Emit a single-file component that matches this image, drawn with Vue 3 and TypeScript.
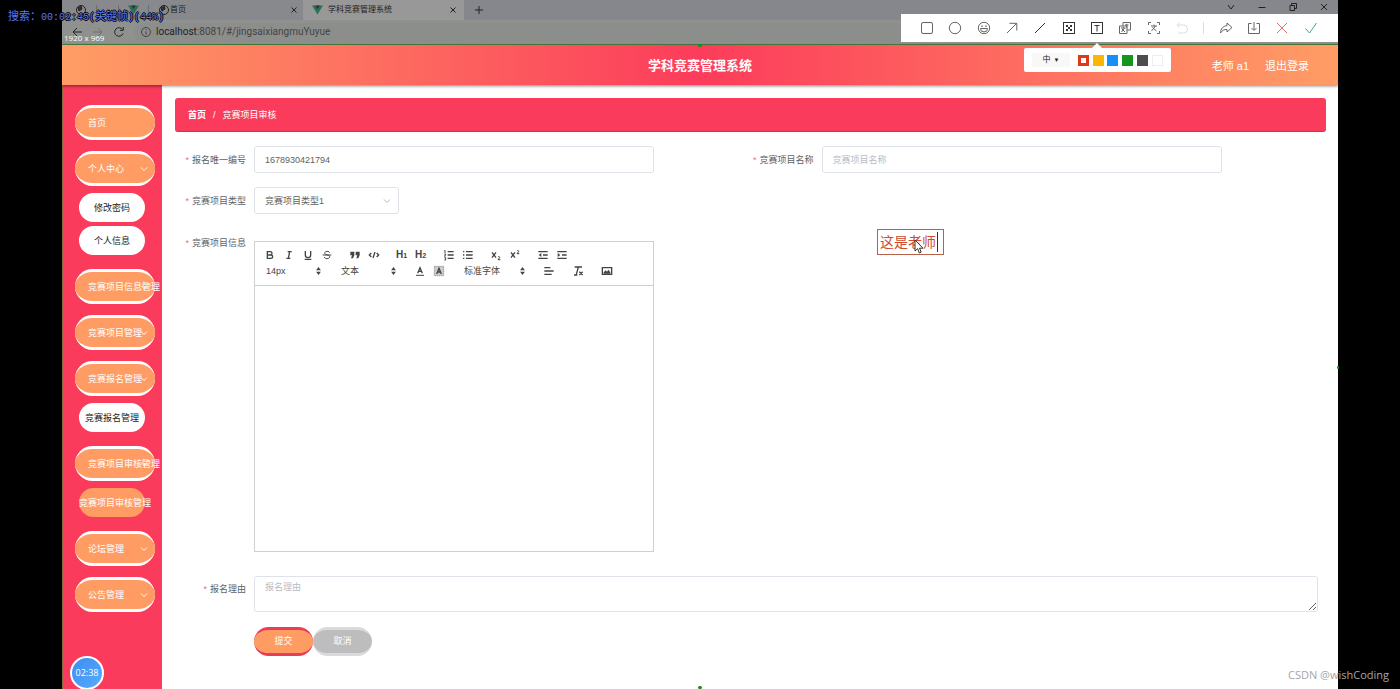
<script setup lang="ts">
import { ref } from 'vue'

interface MenuEntry {
  label: string
  arrow?: boolean
  children?: { label: string; active?: boolean }[]
}

const menu: MenuEntry[] = [
  { label: '首页' },
  { label: '个人中心', arrow: true, children: [{ label: '修改密码' }, { label: '个人信息' }] },
  { label: '竞赛项目信息管理', arrow: true },
  { label: '竞赛项目管理', arrow: true },
  { label: '竞赛报名管理', arrow: true, children: [{ label: '竞赛报名管理' }] },
  { label: '竞赛项目审核管理', arrow: true, children: [{ label: '竞赛项目审核管理', active: true }] },
  { label: '论坛管理', arrow: true },
  { label: '公告管理', arrow: true },
]

const signupNo = ref('1678930421794')
const projectName = ref('')
const projectType = ref('竞赛项目类型1')
const reason = ref('')
const note = ref('这是老师')

const swatches = ['red', 'yellow', 'blue', 'green', 'gray', 'white']
</script>

<template>
  <div class="screen">
    <div class="stage">
      <div class="tabs">
        <div class="tab idle">
          <svg class="pin" viewBox="0 0 12 12"><circle cx="6" cy="6" r="4.5" /><path d="M3 4l3-2 1 3-3 2z" class="fill" /></svg>
          <i class="bar"></i>
          <i class="bar"></i>
          <svg class="vue" viewBox="0 0 12 10"><path d="M0 0h12L6 10z" fill="#2f6f58" /><path d="M3.5 0h5L6 4z" fill="#27343f" /></svg>
          <i class="bar"></i>
          <svg class="pin" viewBox="0 0 12 12"><circle cx="6" cy="6" r="4.5" /><path d="M3 4l3-2 1 3-3 2z" class="fill" /></svg>
          <span class="tab-title">首页</span>
          <button class="x" aria-label="关闭"><svg viewBox="0 0 8 8"><path d="M1.5 1.5l5 5M6.5 1.5l-5 5" /></svg></button>
        </div>
        <div class="tab current">
          <svg class="vue" viewBox="0 0 12 10"><path d="M0 0h12L6 10z" fill="#2f6f58" /><path d="M3.5 0h5L6 4z" fill="#27343f" /></svg>
          <span class="tab-title">学科竞赛管理系统</span>
          <button class="x" aria-label="关闭"><svg viewBox="0 0 8 8"><path d="M1.5 1.5l5 5M6.5 1.5l-5 5" /></svg></button>
        </div>
        <button class="plus" aria-label="新标签页"><svg viewBox="0 0 10 10"><path d="M5 1v8M1 5h8" /></svg></button>
        <div class="win">
          <button aria-label="更多"><svg viewBox="0 0 10 10"><path d="M2 3l3 4 3-4" /></svg></button>
          <button aria-label="最小化"><svg viewBox="0 0 10 10"><path d="M1.5 5.5h7" /></svg></button>
          <button aria-label="还原"><svg viewBox="0 0 10 10"><path d="M2 3.5h4.5v5H2zM3.5 3V1.5h5v5H7" /></svg></button>
          <button aria-label="关闭窗口"><svg viewBox="0 0 10 10"><path d="M2 2l6 6M8 2l-6 6" /></svg></button>
        </div>
      </div>
      <div class="address">
        <button aria-label="后退"><svg viewBox="0 0 12 12"><path d="M11 6H2M6 2L2 6l4 4" /></svg></button>
        <button class="dim" aria-label="前进"><svg viewBox="0 0 12 12"><path d="M1 6h9M6 2l4 4-4 4" /></svg></button>
        <button aria-label="刷新"><svg viewBox="0 0 12 12"><path d="M10 7.5A4.3 4.3 0 1 1 9.5 3.5M10.3 1v3.3H7" /></svg></button>
        <div class="url">
          <svg viewBox="0 0 12 12"><circle cx="6" cy="6" r="4.5" /><path d="M6 5.5v3M6 3.3v1" /></svg>
          <span><b>localhost</b>:8081/#/jingsaixiangmuYuyue</span>
        </div>
      </div>

      <header class="header">
        <h1>学科竞赛管理系统</h1>
        <nav>
          <span>老师 a1</span>
          <a href="#">退出登录</a>
        </nav>
      </header>

      <div class="body">
        <aside class="side">
          <div v-for="item in menu" :key="item.label" class="group">
            <button class="item">
              {{ item.label }}
              <svg v-if="item.arrow" viewBox="0 0 8 8"><path d="M1 2.5l3 3 3-3" /></svg>
            </button>
            <div v-if="item.children" class="subs">
              <button v-for="c in item.children" :key="c.label" class="sub" :class="{ active: c.active }">
                <span>{{ c.label }}</span>
              </button>
            </div>
          </div>
        </aside>

        <main class="main">
          <div class="crumb"><a href="#">首页</a><i>/</i><span>竞赛项目审核</span></div>

          <form class="form" @submit.prevent>
            <div class="cols">
              <div class="row">
                <label for="no">报名唯一编号</label>
                <input id="no" v-model="signupNo" class="box" type="text" />
              </div>
              <div class="row">
                <label for="name">竞赛项目名称</label>
                <input id="name" v-model="projectName" class="box" type="text" placeholder="竞赛项目名称" />
              </div>
            </div>
            <div class="row">
              <label for="type">竞赛项目类型</label>
              <div class="select">
                <select id="type" v-model="projectType" class="box">
                  <option>竞赛项目类型1</option>
                </select>
                <svg viewBox="0 0 8 8"><path d="M1 2.5l3 3 3-3" /></svg>
              </div>
            </div>
            <div class="row">
              <label for="info">竞赛项目信息</label>
              <div class="editor">
                <div class="tools">
                  <div class="line first">
                    <span class="set">
                      <button type="button" aria-label="加粗"><svg viewBox="0 0 18 18"><path class="w2" d="M5 4h4.500a2.500 2.500 0 0 1 0 5H5zM5 9h5.500a2.500 2.500 0 0 1 0 5H5z" /></svg></button>
                      <button type="button" aria-label="斜体"><svg viewBox="0 0 18 18"><path class="w2" d="M7 4h6M5 14h6M8 14l2-10" /></svg></button>
                      <button type="button" aria-label="下划线"><svg viewBox="0 0 18 18"><path class="w2" d="M5 3v6a4 4 0 0 0 8 0V3M4 15.500h10" /></svg></button>
                      <button type="button" aria-label="删除线"><svg viewBox="0 0 18 18"><path d="M2.500 9h13M13 5.500C12 3.500 9.500 3.200 7.500 3.800 5 4.600 4.800 8 8 8.500l3 .8c3 1 2.500 4.500-.5 5-2.500.5-5-.3-5.700-2.300" /></svg></button>
                    </span>
                    <span class="set">
                      <button type="button" aria-label="引用"><svg viewBox="0 0 18 18"><path class="f" d="M2 4h6v5.500L6 14H3l1.500-4.500H2zM10 4h6v5.500L14 14h-3l1.500-4.500H10z" /></svg></button>
                      <button type="button" aria-label="代码"><svg viewBox="0 0 18 18"><path class="w2" d="M5 6L2 9l3 3M13 6l3 3-3 3M10.500 4.500l-3 9" /></svg></button>
                    </span>
                    <span class="set">
                      <button type="button" class="txt">H<small>1</small></button>
                      <button type="button" class="txt">H<small>2</small></button>
                    </span>
                    <span class="set">
                      <button type="button" aria-label="有序列表"><svg viewBox="0 0 18 18"><path class="w2" d="M7 4h9M7 9h9M7 14h9" /><path d="M2 3l1-1v4M2 7.500h2v1.500l-2 1.500h2M2 13h2v3.500H2" /></svg></button>
                      <button type="button" aria-label="无序列表"><svg viewBox="0 0 18 18"><path class="w2" d="M6 4h10M6 9h10M6 14h10M1.500 4h2M1.500 9h2M1.500 14h2" /></svg></button>
                    </span>
                    <span class="set">
                      <button type="button" aria-label="下标"><svg viewBox="0 0 18 18"><path class="w2" d="M3 5l6 8M9 5l-6 8" /><path d="M12 12c1-1.500 3-.5 2.500 1L12 16h3.500" /></svg></button>
                      <button type="button" aria-label="上标"><svg viewBox="0 0 18 18"><path class="w2" d="M3 5l6 8M9 5l-6 8" /><path d="M12 3c1-1.500 3-.5 2.500 1L12 7h3.500" /></svg></button>
                    </span>
                    <span class="set">
                      <button type="button" aria-label="减少缩进"><svg viewBox="0 0 18 18"><path class="w2" d="M2 4h14M9 9h7M2 14h14" /><path class="f" d="M6.500 6v6L2.500 9z" /></svg></button>
                      <button type="button" aria-label="增加缩进"><svg viewBox="0 0 18 18"><path class="w2" d="M2 4h14M9 9h7M2 14h14" /><path class="f" d="M2.500 6v6l4-3z" /></svg></button>
                    </span>
                  </div>
                  <div class="line second">
                    <span class="pick">
                      <select aria-label="字号"><option>14px</option></select>
                      <svg viewBox="0 0 6 10"><path d="M0 4l3-4 3 4zM0 6l3 4 3-4z" /></svg>
                    </span>
                    <span class="pick">
                      <select aria-label="标题"><option>文本</option></select>
                      <svg viewBox="0 0 6 10"><path d="M0 4l3-4 3 4zM0 6l3 4 3-4z" /></svg>
                    </span>
                    <span class="set">
                      <button type="button" aria-label="文字颜色"><svg viewBox="0 0 18 18"><path d="M3 15.500h12" /><path class="w2" d="M5.500 12.500L9 4l3.500 8.500M7 9.500h4" /></svg></button>
                      <button type="button" aria-label="背景颜色"><svg viewBox="0 0 18 18"><path class="hatch" d="M2 2h14v14H2z" /><path class="w2" d="M5.500 13.500L9 5l3.500 8.500M7 10.500h4" /></svg></button>
                    </span>
                    <span class="pick wide">
                      <select aria-label="字体"><option>标准字体</option></select>
                      <svg viewBox="0 0 6 10"><path d="M0 4l3-4 3 4zM0 6l3 4 3-4z" /></svg>
                    </span>
                    <span class="set">
                      <button type="button" aria-label="对齐"><svg viewBox="0 0 18 18"><path class="w2" d="M2 4h9M2 9h14M2 14h11" /></svg></button>
                    </span>
                    <span class="set">
                      <button type="button" aria-label="清除格式"><svg viewBox="0 0 18 18"><path class="w2" d="M4 3h11M9.500 3l-3 11M3 15h5M11 10l5 5M16 10l-5 5" /></svg></button>
                    </span>
                    <span class="set">
                      <button type="button" aria-label="图片"><svg viewBox="0 0 18 18"><path class="w2" d="M2 4h14v10H2z" /><path class="f" d="M4 13v-2l3-3 2 2 2-3 3 4v2z" /></svg></button>
                    </span>
                  </div>
                </div>
                <textarea id="info" class="paper"></textarea>
              </div>
            </div>
            <div class="row reason">
              <label for="reason">报名理由</label>
              <textarea id="reason" v-model="reason" class="box" placeholder="报名理由"></textarea>
            </div>
            <div class="actions">
              <button type="submit" class="go">提交</button>
              <button type="button" class="cancel">取消</button>
            </div>
          </form>
        </main>
      </div>

      <i class="dot top"></i>
      <i class="dot bottom"></i>
      <i class="dot right"></i>

      <div class="note">
        <input v-model="note" type="text" aria-label="文字标注" />
        <svg viewBox="0 0 10 15"><path d="M1 1v11l2.600-2.400L5.300 14l1.900-.9-1.700-3.900H9z" /></svg>
      </div>

      <div class="capture">
        <button aria-label="矩形"><svg viewBox="0 0 14 14"><rect x="1.500" y="1.500" width="11" height="11" rx="1.500" /></svg></button>
        <button aria-label="椭圆"><svg viewBox="0 0 14 14"><circle cx="7" cy="7" r="5.700" /></svg></button>
        <button aria-label="表情"><svg viewBox="0 0 14 14"><circle cx="7" cy="7" r="5.700" /><path d="M3.500 7.500h7a3.500 3.500 0 0 1-7 0zM4 5.500q1-1.500 2 0M8 5.500q1-1.500 2 0" /></svg></button>
        <button aria-label="箭头"><svg viewBox="0 0 14 14"><path d="M2 12l9.500-9.500M4.500 2.300h7.300v7.200" /></svg></button>
        <button aria-label="画笔"><svg viewBox="0 0 14 14"><path class="dark" d="M2 12L12 2" /></svg></button>
        <button aria-label="马赛克"><svg viewBox="0 0 14 14"><rect class="dark" x="1.500" y="1.500" width="11" height="11" /><path class="solid" d="M4 4h2v2H4zM8 4h2v2H8zM6 6h2v2H6zM4 8h2v2H4zM8 8h2v2H8z" /></svg></button>
        <button aria-label="文字"><svg viewBox="0 0 14 14"><rect class="dark" x="1.500" y="1.500" width="11" height="11" /><path class="dark" d="M4.500 4.500h5M7 4.500v6" /></svg></button>
        <button aria-label="翻译"><svg viewBox="0 0 14 14"><path d="M5 5V1.500h7.500V9H9M1.500 5H9v7.500H1.500zM3 7h4.500M5.200 6v1M3.500 11l3-4M4 8l3 3M7 4h3.500M8.800 2.800v4" /></svg></button>
        <button aria-label="识字"><svg viewBox="0 0 14 14"><path d="M1.500 4V1.500H4M10 1.500h2.500V4M12.500 10v2.500H10M4 12.500H1.500V10M4 5h6M7 3.500V5M4.500 10l4-5M5.500 6.500l4 3.500" /></svg></button>
        <button class="off" aria-label="撤销"><svg viewBox="0 0 14 14"><path d="M4.500 1.500L2 4l2.500 2.500M2 4h6.500a4 4 0 0 1 0 8H3" /></svg></button>
        <i></i>
        <button aria-label="分享"><svg viewBox="0 0 14 14"><path d="M8 2l5 4.500L8 11V8.500C5 8.300 3 9.500 1.500 12 1.500 8 4 5 8 4.700z" /></svg></button>
        <button aria-label="保存"><svg viewBox="0 0 14 14"><path d="M4.500 2.500h-3v10h11v-10h-3M7 1v8M4.500 7L7 9.500 9.500 7" /></svg></button>
        <button class="no" aria-label="退出截图"><svg viewBox="0 0 14 14"><path d="M2 2l10 10M12 2L2 12" /></svg></button>
        <button class="yes" aria-label="完成"><svg viewBox="0 0 14 14"><path d="M1.500 7.500l4 4.500 7-10" /></svg></button>
      </div>
      <div class="palette">
        <button class="size">中<span>▼</span></button>
        <button v-for="s in swatches" :key="s" class="swatch" :class="s" :aria-label="s"></button>
      </div>

      <div class="timer">02:38</div>
    </div>

    <div class="dimensions">1920 x 969</div>
    <div class="seek">搜索：<span>00:02:45(</span>关键帧<span>)(44%)</span></div>
    <div class="mark">CSDN @wishCoding</div>
  </div>
</template>

<style>
body {
  margin: 0;
  background: #000;
}
</style>

<style scoped>
.screen {
  position: relative;
  box-sizing: border-box;
  min-height: 100vh;
  padding: 0 62px;
  background: #000;
  font: 9px/1.5 "Liberation Sans", "Noto Sans CJK SC", sans-serif;
  color: #606266;
}
.screen *,
.screen *::before,
.screen *::after {
  box-sizing: border-box;
}
.stage {
  position: relative;
  display: flex;
  flex-direction: column;
  min-height: 100vh;
  background: #fff;
}
button {
  padding: 0;
  border: 0;
  background: none;
  color: inherit;
  font: inherit;
  line-height: 1;
}
input,
select,
textarea {
  font: inherit;
  color: inherit;
}
a {
  color: inherit;
  text-decoration: none;
}
svg {
  display: block;
  fill: none;
  stroke: currentColor;
}

/* browser chrome */
.tabs {
  display: flex;
  height: 20px;
  background: #85878d;
  color: #222;
  font-size: 8px;
}
.tab {
  display: flex;
  align-items: center;
  gap: 5px;
}
.idle {
  width: 241px;
  padding: 0 5px 0 13px;
  background: #88898c;
  border-radius: 0 0 6px 0;
}
.idle .tab-title {
  margin-left: -5px;
}
.current {
  width: 161px;
  padding: 0 7px 0 9px;
  background: #979897;
}
.tab-title {
  flex: 1;
}
.pin {
  width: 12px;
  height: 12px;
}
.pin .fill {
  fill: #333;
}
.bar {
  width: 1px;
  height: 10px;
  margin: 0 4px;
  background: #6d6e72;
}
.bar + .bar {
  margin-left: 12px;
}
.vue {
  width: 11px;
  height: 10px;
  stroke: none;
}
.x svg {
  width: 8px;
  height: 8px;
}
.plus {
  width: 29px;
}
.plus svg {
  width: 10px;
  height: 10px;
  margin: auto;
}
.win {
  display: flex;
  gap: 21px;
  align-items: flex-start;
  margin: 2px 9px 0 auto;
}
.win svg {
  width: 10px;
  height: 10px;
}
.address {
  display: flex;
  align-items: center;
  gap: 9px;
  height: 25px;
  padding: 0 8px 0 9px;
  border-bottom: 1px solid #4a8340;
  background: #8f918f;
  color: #222;
}
.address svg {
  width: 12px;
  height: 12px;
}
.dim {
  color: #6f706f;
}
.url {
  display: flex;
  flex: 1;
  align-items: center;
  gap: 4px;
  height: 19px;
  padding-left: 6px;
  border-radius: 10px;
  background: #8c8e8c;
  color: #444;
  font: 10px/1 Roboto, sans-serif;
}
.url b {
  font-weight: 400;
  color: #222;
}

/* application header */
.header {
  position: relative;
  z-index: 1;
  display: grid;
  grid-template-columns: 1fr auto 1fr;
  align-items: center;
  height: 40px;
  padding: 1px 29px 0;
  background: linear-gradient(90deg, #ff9d65, #fc3c5b 50%, #ff9d65);
  box-shadow: 0 1px 3px rgba(0, 0, 0, 0.5);
  color: #fff;
}
.header h1 {
  grid-column: 2;
  margin: 0;
  font-size: 13px;
  line-height: 20px;
}
.header nav {
  display: flex;
  justify-content: flex-end;
  gap: 16px;
  font: 11px/20px "Liberation Sans", "Noto Sans CJK SC", sans-serif;
}
.body {
  display: flex;
  flex: 1;
}

/* side menu */
.side {
  display: flex;
  flex-direction: column;
  gap: 11px;
  width: 100px;
  padding: 20px 7px 20px 12px;
  border-left: 1px solid #8b6a3c;
  background: #fb3b5b;
  overflow: hidden;
}
.item {
  position: relative;
  display: block;
  width: 80px;
  height: 35px;
  padding: 2px 0 0 13px;
  border: solid #fff;
  border-width: 3px 0;
  border-radius: 18px;
  background: #ff9c64;
  color: #fff;
  text-align: left;
  white-space: nowrap;
}
.item svg {
  position: absolute;
  top: 11px;
  right: 7px;
  width: 8px;
  height: 8px;
}
.subs {
  display: flex;
  flex-direction: column;
  gap: 4px;
  width: 80px;
  padding: 7px 10px 3px 4px;
}
.sub {
  display: flex;
  align-items: center;
  justify-content: center;
  height: 29px;
  padding-top: 2px;
  border-radius: 15px;
  background: #fff;
  color: #222;
  white-space: nowrap;
}
.sub.active {
  justify-content: flex-start;
  background: #ff9c64;
  color: #fff;
}

/* content */
.main {
  flex: 1;
  padding: 13px 12px 20px 13px;
}
.crumb {
  display: flex;
  align-items: center;
  height: 34px;
  padding: 2px 13px 0;
  border-radius: 3px;
  border-bottom: 1px solid #c83652;
  background: #fb3b5b;
  color: #fff;
}
.crumb a {
  font-weight: 700;
}
.crumb i {
  margin: 0 7px;
  font-style: normal;
}
.form {
  display: flex;
  flex-direction: column;
  gap: 14px;
  padding: 14px 8px 0 0;
}
.cols {
  display: grid;
  grid-template-columns: 1fr 1fr;
  margin-right: 8px;
}
.row {
  display: flex;
}
.row label {
  flex: none;
  width: 79px;
  padding-right: 8px;
  line-height: 28px;
  text-align: right;
}
.row label::before {
  content: "*";
  margin-right: 3px;
  color: #f56c6c;
}
.box {
  width: 400px;
  height: 27px;
  margin: 0;
  padding: 0 10px;
  border: 1px solid #dfe2e8;
  border-radius: 3px;
  background: #fff;
  outline: 0;
}
.box::placeholder {
  color: #b9bcc4;
}
.cols .row {
  height: 27px;
}
.select {
  position: relative;
}
.select .box {
  width: 145px;
  padding-top: 2px;
  appearance: none;
}
.select svg {
  position: absolute;
  top: 10px;
  right: 8px;
  width: 8px;
  height: 8px;
  color: #b4b8c0;
}
.editor {
  display: flex;
  flex-direction: column;
  width: 400px;
  height: 311px;
  margin-top: 12px;
  border: 1px solid #d0d0d0;
  color: #444;
}
.tools {
  padding: 5px 5px 6px;
  border-bottom: 1px solid #d0d0d0;
}
.line {
  display: flex;
  height: 16px;
}
.first {
  gap: 9px;
}
.second {
  gap: 10px;
}
.set {
  display: flex;
}
.set button {
  width: 19px;
  height: 16px;
}
.set svg {
  width: 12px;
  height: 12px;
  margin: auto;
  stroke-width: 1.5;
}
.set .w2 {
  stroke-width: 2;
}
.f {
  fill: currentColor;
  stroke: none;
}
.set .hatch {
  stroke: #999;
  stroke-dasharray: 2 1;
  fill: #ccc;
}
.set .txt {
  font-size: 10px;
  font-weight: 700;
}
.txt small {
  font-size: 7px;
}
.pick {
  position: relative;
  width: 65px;
}
.pick.wide {
  width: 71px;
}
.pick select {
  width: 100%;
  height: 16px;
  padding: 1px 12px 0 6px;
  border: 0;
  appearance: none;
  background: none;
}
.pick svg {
  position: absolute;
  top: 4px;
  right: 4px;
  width: 5px;
  height: 8px;
  fill: currentColor;
  stroke: none;
}
.paper {
  flex: 1;
  width: 100%;
  padding: 8px 10px;
  border: 0;
  outline: 0;
  resize: none;
  background: none;
}
.reason {
  padding: 10px 0 1px;
}
.reason .box {
  flex: 1;
  height: 36px;
  padding: 4px 10px;
}
.reason label {
  line-height: 26px;
}
.actions {
  display: flex;
  padding-left: 79px;
}
.actions button {
  width: 59px;
  height: 29px;
  border: solid #ea3d56;
  border-width: 3px 0;
  border-radius: 15px;
  background: #ff9c64;
  color: #fff;
}
.actions .cancel {
  border-color: #d8dadd;
  background: #bdbdbd;
}

/* capture overlay */
.dot {
  position: absolute;
  width: 4px;
  height: 3px;
  border-radius: 2px;
  background: #19901c;
}
.dot.top {
  z-index: 2;
  top: 44px;
  left: 50%;
  margin-left: -2px;
}
.dot.bottom {
  bottom: 0;
  left: 50%;
  margin-left: -2px;
}
.dot.right {
  top: 366px;
  right: -1px;
  width: 2px;
}
.note {
  position: absolute;
  top: 229px;
  left: 815px;
  width: 67px;
  height: 26px;
  border: 1px solid #b9604c;
}
.note input {
  width: 58px;
  height: 20px;
  margin: 2px 0 0 2px;
  padding: 0;
  border: 0;
  border-right: 1px solid #333;
  outline: 0;
  background: none;
  color: #d04a30;
  font-size: 14px;
  line-height: 20px;
}
.note svg {
  position: absolute;
  top: 9px;
  left: 36px;
  width: 10px;
  height: 15px;
  fill: #fff;
  stroke: #333;
}
.capture {
  position: absolute;
  z-index: 2;
  top: 14px;
  right: 0;
  display: flex;
  align-items: center;
  justify-content: space-between;
  width: 437px;
  height: 28px;
  padding: 0 20px 0 19px;
  background: #fff;
  color: #666;
}
.capture svg {
  width: 14px;
  height: 14px;
}
.capture .dark {
  stroke: #333;
}
.capture .solid {
  fill: #333;
  stroke: none;
}
.capture i {
  width: 1px;
  height: 12px;
  background: #ddd;
}
.capture .off {
  color: #ddd;
}
.capture .no {
  color: #ee6a63;
}
.capture .yes {
  color: #35b083;
}
.palette {
  position: absolute;
  z-index: 2;
  top: 48px;
  right: 167px;
  display: flex;
  align-items: center;
  justify-content: space-between;
  width: 147px;
  height: 24px;
  padding: 0 8px;
  border-radius: 2px;
  background: #fff;
}
.palette::before {
  content: "";
  position: absolute;
  top: -5px;
  left: 68px;
  border: solid transparent;
  border-width: 0 5px 5px;
  border-bottom-color: #fff;
}
.size {
  width: 38px;
  height: 14px;
  margin-right: 4px;
  border-radius: 2px;
  background: #f8f8f8;
  color: #222;
  font-size: 8px;
}
.size span {
  margin-left: 3px;
  font-size: 6px;
  vertical-align: middle;
}
.swatch {
  width: 11px;
  height: 11px;
}
.red {
  border: 3px solid #e03a14;
}
.yellow {
  background: #fbb606;
}
.blue {
  background: #1590f8;
}
.green {
  background: #14951b;
}
.gray {
  background: #4d4d4d;
}
.white {
  border: 1px solid #eee;
}
.timer {
  position: absolute;
  bottom: -1px;
  left: 8px;
  width: 34px;
  height: 34px;
  border: 2px solid #fff;
  border-radius: 50%;
  background: linear-gradient(135deg, #3f8cf0, #55acff);
  color: #fff;
  font: 9px/30px "Open Sans", sans-serif;
  text-align: center;
}
.dimensions {
  position: absolute;
  top: 32px;
  left: 64px;
  color: #fff;
  font: 8px/12px "Open Sans", sans-serif;
}
.seek {
  position: absolute;
  top: 7px;
  left: 8px;
  color: #5678ee;
  font: 11px/16px "Noto Sans CJK SC", sans-serif;
  text-shadow: 1px 0 #001, -1px 0 #001, 0 1px #001, 0 -1px #001;
  white-space: nowrap;
}
.seek span {
  font: 10px/16px "Liberation Mono", monospace;
}
.mark {
  position: absolute;
  right: 11px;
  bottom: 6px;
  color: #a6a6a6;
  font: 11px/16px "Open Sans", sans-serif;
}
</style>
